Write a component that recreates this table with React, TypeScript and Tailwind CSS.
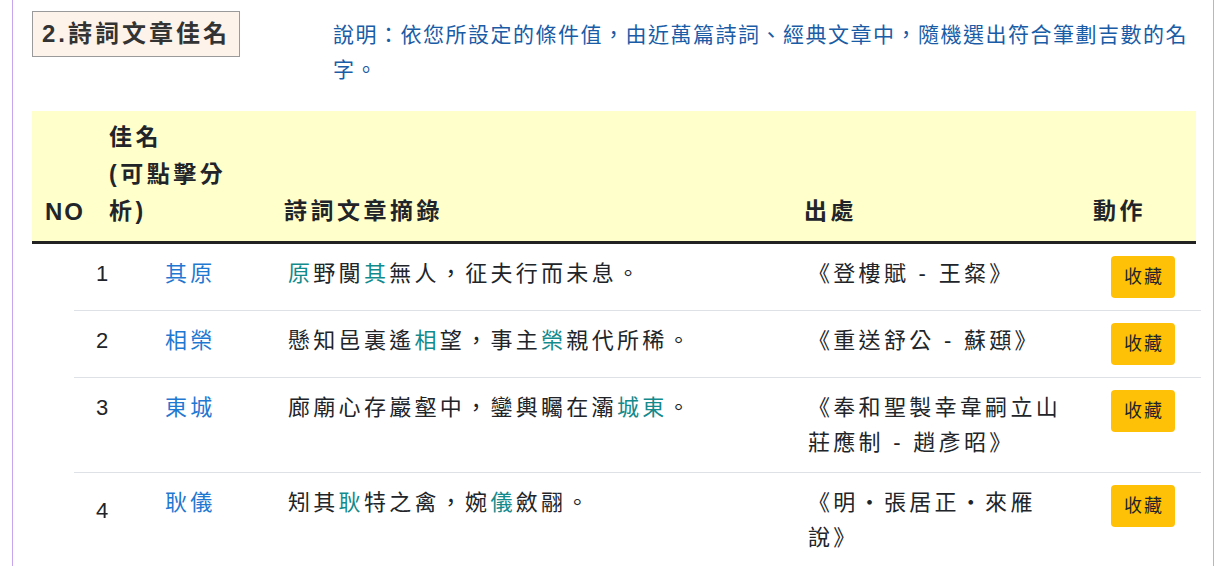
import React from "react";

type Row = {
  no: string;
  name: string;
  parts: { t: string; h?: boolean }[];
  source: string;
  noPad?: boolean;
};

const rows: Row[] = [
  {
    no: "1",
    name: "其原",
    parts: [
      { t: "原", h: true },
      { t: "野闃" },
      { t: "其", h: true },
      { t: "無人，征夫行而未息。" },
    ],
    source: "《登樓賦 - 王粲》",
  },
  {
    no: "2",
    name: "相榮",
    parts: [
      { t: "懸知邑裏遙" },
      { t: "相", h: true },
      { t: "望，事主" },
      { t: "榮", h: true },
      { t: "親代所稀。" },
    ],
    source: "《重送舒公 - 蘇頲》",
  },
  {
    no: "3",
    name: "東城",
    parts: [
      { t: "廊廟心存巖壑中，鑾輿矚在灞" },
      { t: "城東", h: true },
      { t: "。" },
    ],
    source: "《奉和聖製幸韋嗣立山莊應制 - 趙彥昭》",
  },
  {
    no: "4",
    name: "耿儀",
    parts: [
      { t: "矧其" },
      { t: "耿", h: true },
      { t: "特之禽，婉" },
      { t: "儀", h: true },
      { t: "斂翮。" },
    ],
    source: "《明・張居正・來雁說》",
    noPad: true,
  },
];

export default function App() {
  return (
    <div className="w-[1228px] h-[566px] overflow-hidden bg-white font-['Liberation_Sans','Noto_Sans_CJK_TC',sans-serif] text-[#212529]">
      <div className="ml-[12px] w-[1202px] min-h-[566px] border-l border-r border-[#c7a6ef] pl-[19px]">
        {/* Top section */}
        <div className="flex items-start pt-[11px]">
          <div className="h-[46px] shrink-0 border border-[#9a9a9a] bg-[#fdf3ea] px-[9px] text-[24px] font-bold leading-[44px] tracking-[3px] text-[#333]">
            2.詩詞文章佳名
          </div>
          <p className="ml-[93px] mt-[6px] w-[866px] text-[21px] leading-[35px] tracking-[1.5px] text-[#1a5ca6]">
            說明：依您所設定的條件值，由近萬篇詩詞、經典文章中，隨機選出符合筆劃吉數的名字。
          </p>
        </div>

        {/* Table header */}
        <div className="mt-[24px] flex w-[1164px] items-end border-b-[3px] border-[#222] bg-[#ffffcc] pt-[8px] pb-[11px] text-[23px] font-bold leading-[37px] tracking-[3.5px] text-[#212529]">
          <div className="w-[77px] shrink-0 pl-[13px] text-[24px] tracking-[2px]">NO</div>
          <div className="flex w-[175px] shrink-0 flex-col">
            <span>佳名</span>
            <span>(可點擊分</span>
            <span>析)</span>
          </div>
          <div className="w-[520px] shrink-0">詩詞文章摘錄</div>
          <div className="w-[289px] shrink-0">出處</div>
          <div className="flex-1">動作</div>
        </div>

        {/* Table body */}
        <div className="ml-[42px] w-[1127px]">
          {rows.map((r) => (
            <div
              key={r.no}
              className="flex items-start border-b border-[#dee2e6] py-[12px] text-[22px] leading-[35px] tracking-[3.3px]"
            >
              <div
                className={
                  r.noPad
                    ? "w-[91px] shrink-0 pl-[22px] pt-[8px]"
                    : "w-[91px] shrink-0 pl-[22px]"
                }
              >
                {r.no}
              </div>
              <div className="w-[123px] shrink-0 text-[#1f78d1]">{r.name}</div>
              <div className="w-[520px] shrink-0">
                {r.parts.map((p, i) =>
                  p.h ? (
                    <span key={i} className="text-[#138a8c]">
                      {p.t}
                    </span>
                  ) : (
                    <span key={i}>{p.t}</span>
                  )
                )}
              </div>
              <div className="w-[303px] shrink-0">
                <div className="w-[262px]">{r.source}</div>
              </div>
              <div className="flex-1">
                <button className="h-[42px] w-[64px] rounded-[4px] bg-[#ffc107] pl-[2px] text-[18px] leading-[42px] tracking-[2px] text-[#212529]">
                  收藏
                </button>
              </div>
            </div>
          ))}
        </div>
      </div>
    </div>
  );
}
